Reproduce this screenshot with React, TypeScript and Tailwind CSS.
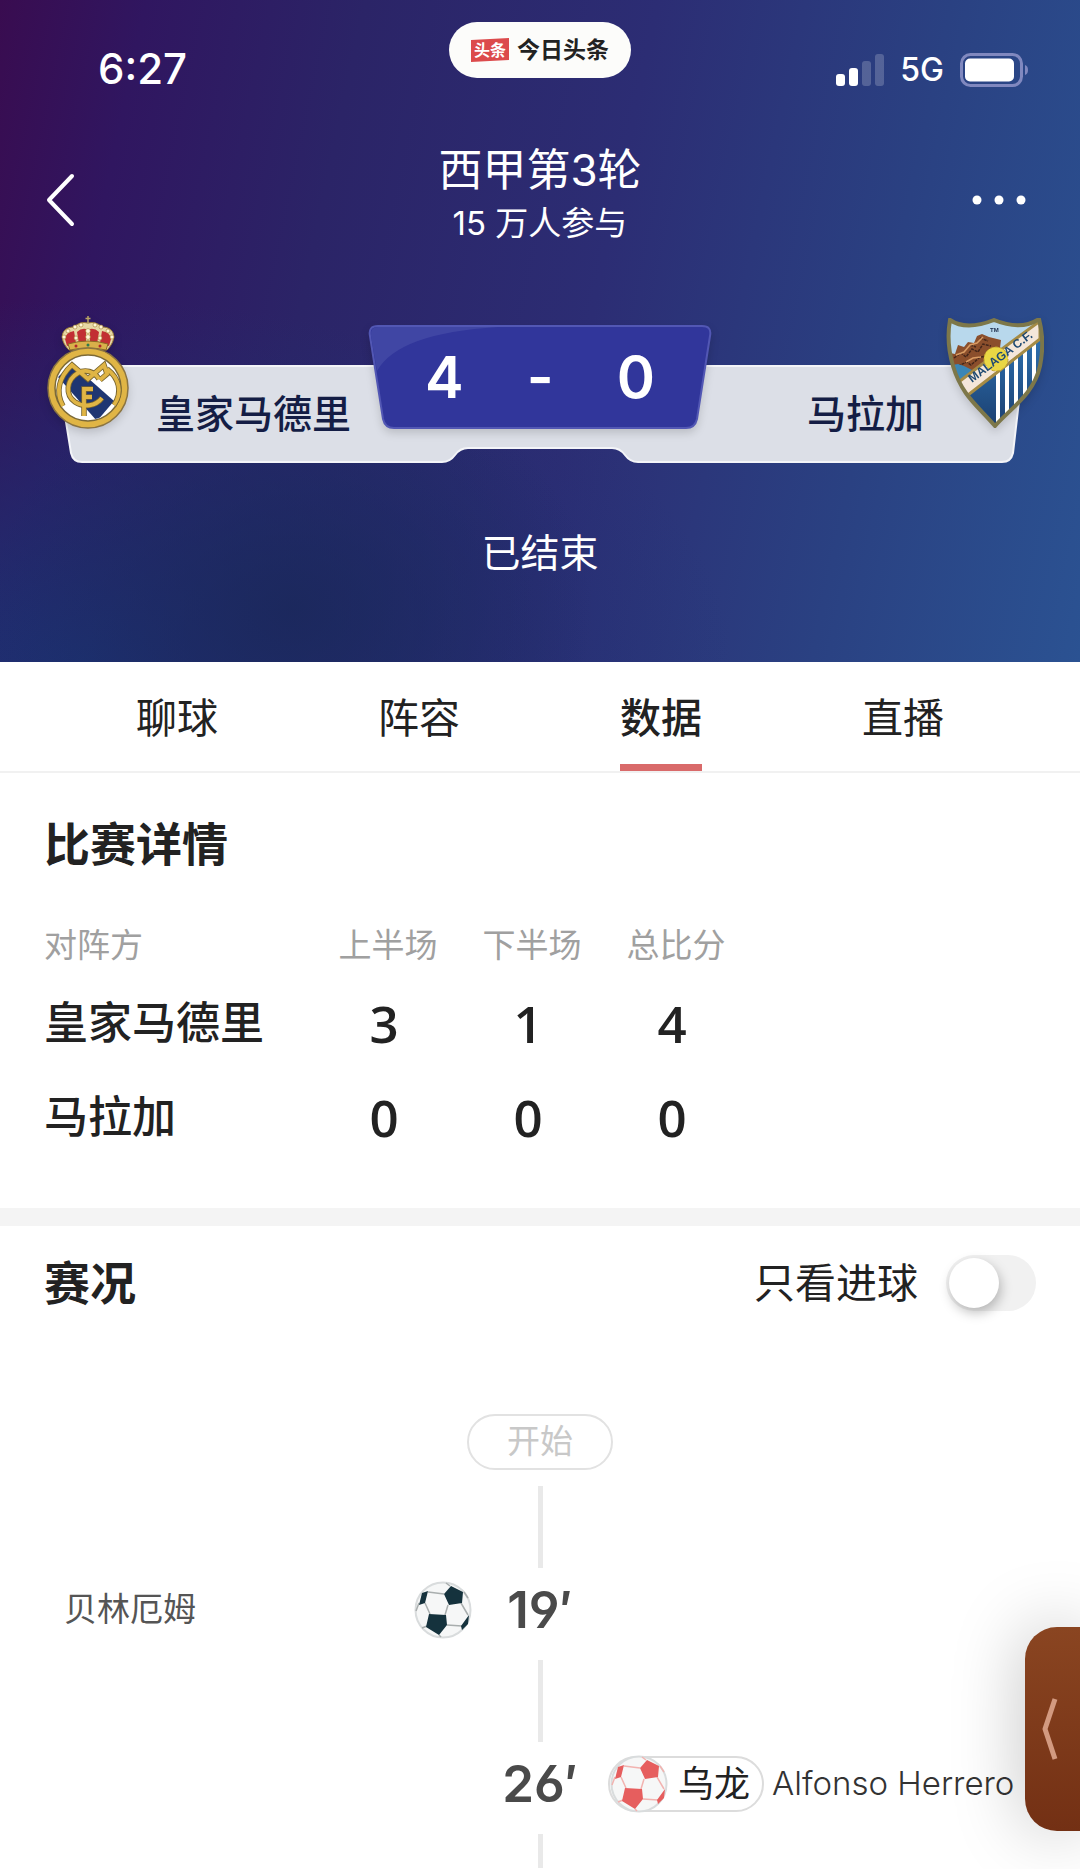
import { useState } from 'react'

const tabs = ['聊球', '阵容', '数据', '直播']

const scores = [
  { team: '皇家马德里', first: 3, second: 1, total: 4 },
  { team: '马拉加', first: 0, second: 0, total: 0 },
]

function SignalIcon() {
  return (
    <svg width="48" height="32" viewBox="0 0 48 32" fill="#fff" aria-hidden="true">
      <rect x="0" y="20" width="9" height="12" rx="3" />
      <rect x="13" y="14" width="9" height="18" rx="3" />
      <rect x="26" y="7" width="9" height="25" rx="3" opacity=".2" />
      <rect x="39" y="0" width="9" height="32" rx="3" opacity=".2" />
    </svg>
  )
}

function BatteryIcon() {
  return (
    <svg width="70" height="34" viewBox="0 0 70 34" aria-hidden="true">
      <rect x="1.5" y="1.5" width="60" height="31" rx="9" fill="none" stroke="#8088bf" strokeWidth="3" />
      <rect x="5" y="5.500" width="49" height="23" rx="5" fill="#fff" />
      <path d="M65 12c4 1 4 9 0 10z" fill="#8088bf" />
    </svg>
  )
}

function MadridCrest() {
  return (
    <svg width="84" height="116" viewBox="0 0 84 116" className="drop-shadow-lg" aria-hidden="true">
      <defs>
        <clipPath id="rm"><circle cx="42" cy="73" r="32" /></clipPath>
      </defs>
      {/* crown */}
      <path d="M23 35C12 24 15 12 28 12Q34 6 42 8q8-2 14 4c13 0 16 12 5 23z" fill="#e6d7a4" stroke="#9a7a34" />
      <path d="M19 24q1-7 9-8l2 12-9 3zM31 17q4-4 9-3v14l-7 1zM44 14q5-1 9 3l-2 12-7-1zM56 16q8 1 9 8l-2 7-9-3z" fill="#c22f33" />
      <g fill="#fff6d8" stroke="#a37d2c" strokeWidth=".6">
        <circle cx="18" cy="22" r="2" /><circle cx="22" cy="16" r="2" /><circle cx="29" cy="12" r="2" />
        <circle cx="35" cy="10" r="2" /><circle cx="49" cy="10" r="2" /><circle cx="55" cy="12" r="2" />
        <circle cx="62" cy="16" r="2" /><circle cx="66" cy="22" r="2" /><circle cx="42" cy="16" r="2.400" />
        <circle cx="42" cy="22" r="2.400" /><circle cx="30" cy="23" r="2" /><circle cx="54" cy="23" r="2" />
      </g>
      <path d="M42 1v8M39.500 3.500h5" stroke="#b9a464" strokeWidth="1.500" />
      <path d="M22 29q20-6 40 0l-2 6q-18-4-36 0z" fill="#d9b04a" stroke="#8a6a25" />
      <circle cx="30" cy="31" r="1.500" fill="#b3262c" /><circle cx="42" cy="30" r="1.500" fill="#2d7a4f" /><circle cx="54" cy="31" r="1.500" fill="#b3262c" />
      {/* roundel */}
      <circle cx="42" cy="73" r="40" fill="#e0b545" stroke="#8b7440" strokeWidth="1.500" />
      <circle cx="42" cy="73" r="33" fill="#fff" stroke="#7c6a38" strokeWidth="1.500" />
      <path d="M12 62l14-13 42 37-17 20z" fill="#1f3672" clipPath="url(#rm)" />
      {[{ c: '#77642f', w: 5.5 }, { c: '#e0b545', w: 3.8 }].map(s => (
        <g key={s.c} fill="none" stroke={s.c} strokeWidth={s.w} strokeLinejoin="miter">
          <path d="M17 91C9 77 13 62 26 50l16 14 16-14 3 9-7 6M61 54c12 9 16 23 7 36" />
          <path d="M53 64c-5-8-14-10-21-6-12 7-13 22-3 29 9 6 21 4 27-4" />
          <path d="M38 101V74h9M38 82h8" />
        </g>
      ))}
    </svg>
  )
}

function MalagaCrest() {
  return (
    <svg width="98" height="110" viewBox="0 0 98 110" className="drop-shadow-lg" aria-hidden="true">
      <defs>
        <clipPath id="mlg"><path d="M4 2Q20 13 48 2q27 11 45-1 6 22 1 47C88 76 65 90 49 108 32 88 16 78 7 48Q0 24 4 2z" /></clipPath>
        <linearGradient id="sea" x1="0" x2="0" y1="0" y2="1">
          <stop offset="0" stopColor="#2f74b4" /><stop offset="1" stopColor="#1b3f70" />
        </linearGradient>
      </defs>
      <g clipPath="url(#mlg)">
        <path d="M0 0h98v110H0z" fill="#b8d8ec" />
        <path d="M0 44l4-9 5 1 3-9 6 2 4-5 6 1 3-7 5-2 7 3 12 3-1 8-8 12-30 20z" fill="#8b4f2c" />
        <path d="M8 40l7-5 5 4 6-8 6 3 5-8 8 2M12 48l9-4 4 3 9-8 10-1M24 27l6 2M34 20l8 3" stroke="#43261a" strokeWidth="1.500" fill="none" strokeDasharray="3 1" />
        <path d="M10 37l8-3 6-7 7-2 6-6M20 44l7-4 8-1" stroke="#d99b62" strokeWidth="1.500" fill="none" />
        <path d="M0 48l12-2 6 2 8 4-20 18z" fill="#3b86b5" />
        <path d="M16 76L98 14v96H16z" fill="url(#sea)" />
        <path d="M50 50h4v60h-4zM59 43h4v60h-4zM68 36h4v60h-4zM77 30h4v56h-4zM86 23h4v50h-4z" fill="#fff" />
        <path d="M10 66L64 25 94 3v18L22 77z" fill="#f4e6da" stroke="#a58b45" strokeWidth="3" />
        <circle cx="50" cy="41" r="12" fill="#ead744" stroke="#c0a22e" strokeDasharray="3 2" />
      </g>
      <path d="M4 2Q20 13 48 2q27 11 45-1 6 22 1 47C88 76 65 90 49 108 32 88 16 78 7 48Q0 24 4 2z" fill="none" stroke="#7d7749" strokeWidth="4" />
      <text transform="translate(26 65) rotate(-37)" fontSize="12" fontWeight="700" fill="#1f4a73" className="font-['Liberation_Sans',sans-serif]">MALAGA C.F.</text>
      <text x="44" y="14" fontSize="6" fontWeight="700" fill="#1a2b4a" className="font-['Liberation_Sans',sans-serif]">TM</text>
    </svg>
  )
}

function Ball({ color, seam }: { color: string; seam: string }) {
  return (
    <svg width="58" height="58" viewBox="0 0 58 58" className="shrink-0" aria-hidden="true">
      <circle cx="29" cy="29" r="27.500" fill="#f6f7f7" stroke="#d9dcdd" strokeWidth="2" />
      <path d="M14 11l16 2M11 22l5 11M34 24l-3 10M47 22l7 12M33 44l15 1M36 5l-4-3M50 11l4 6M5 22l-3 8M13 45l-5 2M25 54l2 2" fill="none" stroke={seam} strokeWidth="1.500" />
      <path d="M37 5l12 6-1 11-13 2-5-11zM15 33l17 1 1 10-8 10-13-8zM8 12l6-2-3 12-6 2zM55 34l-1 9-6 6-1-4z" fill={color} />
    </svg>
  )
}

function Line() {
  return <div className="mx-auto h-[82px] w-[5px] bg-[#e9e9e9]" />
}

export default function App() {
  const [tab, setTab] = useState('数据')
  const [goalsOnly, setGoalsOnly] = useState(false)

  return (
    <div className="relative bg-white font-['Inter','Noto_Sans_CJK_SC',sans-serif] text-[#222]">
      <header className="bg-[radial-gradient(ellipse_28%_38%_at_27%_92%,#1a2759cc_0%,#1a275900_100%),radial-gradient(ellipse_60%_55%_at_8%_100%,#1d3172_0%,#1d317200_100%),linear-gradient(102deg,#390c50_0%,#301660_12%,#2b2467_30%,#2c2d74_54%,#2a4182_78%,#2b5292_100%)] pt-[22px] pb-[85px] text-white">
        {/* Status bar */}
        <div className="grid grid-cols-[1fr_auto_1fr] items-start">
          <div className="flex h-[92px] items-center pl-[98px] text-[42px] font-medium">6:27</div>
          <div className="flex h-14 items-center gap-2 rounded-full bg-[#fcfcfa] px-[22px] text-[#222]">
            <span className="bg-[#dc4b4c] px-[3px] text-[16px] leading-[24px] font-bold text-white [clip-path:polygon(0_8%,100%_0,100%_92%,0_100%)]">头条</span>
            <span className="text-[23px] font-bold">今日头条</span>
          </div>
          <div className="flex h-[92px] items-center justify-end gap-4 pt-1 pr-[50px]">
            <SignalIcon />
            <span className="text-[32px] leading-[40px] font-medium">5G</span>
            <BatteryIcon />
          </div>
        </div>

        <div className="mt-[26px] grid grid-cols-[1fr_auto_1fr] items-center px-11">
          <button aria-label="返回" className="justify-self-start pt-3.5">
            <svg width="32" height="54" viewBox="0 0 32 54" fill="none" stroke="#fff" strokeWidth="4" strokeLinecap="round" strokeLinejoin="round">
              <path d="M28 3L5 27l23 24" />
            </svg>
          </button>
          <div className="text-center">
            <h1 className="text-[44px] leading-[60px]">西甲第3轮</h1>
            <p className="text-[33px] leading-[46px]">15 万人参与</p>
          </div>
          <button aria-label="更多" className="justify-self-end pt-3.5 pr-2.5">
            <svg width="54" height="10" viewBox="0 0 54 10" fill="#fff">
              <circle cx="5" cy="5" r="4.500" />
              <circle cx="27" cy="5" r="4.500" />
              <circle cx="49" cy="5" r="4.500" />
            </svg>
          </button>
        </div>

        {/* Scoreboard */}
        <div className="relative mx-14 mt-[119px] grid h-[98px] grid-cols-[1fr_344px_1fr] items-center text-[39px] font-medium text-[#141d45]">
          <svg viewBox="0 0 968 98" preserveAspectRatio="none" className="absolute inset-0 h-full w-full" aria-hidden="true">
            <path d="M1 1H967L957 88Q955 97 946 97H582Q574 97 569 90Q564 83 556 83H412Q404 83 399 90Q394 97 386 97H26Q17 97 15 88Z" fill="#dcdfe7" stroke="#f3f4f8" strokeWidth="2" />
          </svg>
          <div className="absolute -top-[50px] -left-[10px]"><MadridCrest /></div>
          <div className="relative pl-[100px] whitespace-nowrap">皇家马德里</div>
          <div className="relative -mt-10 flex h-[104px] items-center justify-between self-start px-[57px] text-[58px] leading-[60px] font-semibold text-white">
            <svg viewBox="0 0 344 104" preserveAspectRatio="none" className="absolute inset-0 h-full w-full drop-shadow-lg" aria-hidden="true">
              <path d="M10 1H334Q344 1 342 11L329 94Q327 103 318 103H26Q17 103 15 94L2 11Q0 1 10 1Z" fill="#31369b" stroke="#5257b4" strokeWidth="2" />
              <path d="M10 2H130Q30 8 9 46L3 11Q2 2 10 2Z" fill="#4046a4" />
            </svg>
            <span className="relative">4</span>
            <span className="relative">-</span>
            <span className="relative">0</span>
          </div>
          <div className="relative pr-[100px] text-right whitespace-nowrap">马拉加</div>
          <div className="absolute -top-[47px] -right-[20px]"><MalagaCrest /></div>
        </div>

        <p className="mt-[66px] text-center text-[39px] leading-[48px]">已结束</p>
      </header>

      <nav className="flex border-b-2 border-[#f1f1f1] px-14">
        {tabs.map(t => (
          <button key={t} onClick={() => setTab(t)} className="flex flex-1 justify-center text-[41px]">
            <span className={t === tab ? 'border-b-[7px] border-[#d96a6a] pt-[10px] leading-[92px] font-medium' : 'pt-[10px] leading-[92px]'}>{t}</span>
          </button>
        ))}
      </nav>

      {/* Half-time / full-time scores */}
      <section className="px-11 pt-[41px] pb-11">
        <h2 className="text-[46px] leading-[60px] font-bold">比赛详情</h2>
        <table className="mt-[42px] w-[704px] table-fixed">
          <thead>
            <tr className="h-[60px] text-[33px] text-[#a0a0a0]">
              <th className="w-[272px] p-0 text-left font-normal">对阵方</th>
              <th className="p-0 font-normal">上半场</th>
              <th className="p-0 font-normal">下半场</th>
              <th className="p-0 font-normal">总比分</th>
            </tr>
          </thead>
          <tbody>
            {scores.map(s => (
              <tr key={s.team} className="h-[94px] text-center font-['Open_Sans',sans-serif] text-[51px] leading-[60px] font-semibold">
                <th className="p-0 text-left font-['Inter','Noto_Sans_CJK_SC',sans-serif] text-[44px] font-medium whitespace-nowrap">{s.team}</th>
                <td className="p-0 pr-2">{s.first}</td>
                <td className="p-0 pr-2">{s.second}</td>
                <td className="p-0 pr-2">{s.total}</td>
              </tr>
            ))}
          </tbody>
        </table>
      </section>

      <div className="h-[18px] bg-[#f4f4f4]" />

      {/* Timeline */}
      <section>
        <div className="flex items-center justify-between px-11 pt-[29px]">
          <h2 className="text-[46px] leading-[56px] font-bold">赛况</h2>
          <label className="flex items-center gap-7 text-[41px] leading-[56px]">
            只看进球
            <input
              type="checkbox"
              role="switch"
              checked={goalsOnly}
              onChange={e => setGoalsOnly(e.target.checked)}
              className="h-14 w-[90px] appearance-none rounded-full bg-[#f1f1f1] p-[3px] before:block before:h-[50px] before:w-[50px] before:rounded-full before:bg-white before:shadow-[2px_5px_12px_rgba(0,0,0,0.25)] checked:bg-[#d96a6a] checked:before:ml-[34px]"
            />
          </label>
        </div>

        <div className="mx-auto mt-[103px] mb-4 flex h-14 w-[146px] items-center justify-center rounded-full border-2 border-[#e2e2e2] text-[33px] text-[#c8c8c8]">开始</div>
        <Line />

        <div className="grid h-[92px] grid-cols-[1fr_136px_1fr] items-center px-16 pb-2">
          <div className="flex items-center justify-between text-[33px] text-[#555]">
            贝林厄姆
            <Ball color="#15323d" seam="#a9aeae" />
          </div>
          <time className="text-center text-[51px] leading-[60px] font-semibold text-[#4a4a4a] [font-feature-settings:'ss01']">19′</time>
        </div>
        <Line />

        {!goalsOnly && (
          <>
            <div className="grid h-[92px] grid-cols-[1fr_136px_1fr] items-center px-16 pb-2">
              <time className="col-start-2 text-center text-[51px] leading-[60px] font-semibold text-[#4a4a4a] [font-feature-settings:'ss01']">26′</time>
              <div className="flex items-center gap-2 whitespace-nowrap">
                <div className="flex h-14 items-center gap-2.5 rounded-full border-2 border-[#dcdcdc] pr-3 text-[36px]">
                  <Ball color="#e65e5e" seam="#f2b3b0" />
                  乌龙
                </div>
                <span className="text-[33px] font-light text-[#333]">Alfonso Herrero</span>
              </div>
            </div>
            <div className="mx-auto h-[34px] w-[5px] bg-[#e9e9e9]" />
          </>
        )}
      </section>

      {/* Side drawer handle */}
      <button aria-label="展开" className="fixed right-0 bottom-[38px] flex h-[204px] w-[55px] items-center rounded-l-[32px] bg-linear-to-b from-[#8a4521] to-[#733014] pl-[17px] shadow-[0_0_70px_rgba(0,0,0,0.25)]">
        <svg width="16" height="62" viewBox="0 0 16 62" fill="none" stroke="#d39a80" strokeWidth="5" strokeLinejoin="round">
          <path d="M13 1L3 31l10 30" />
        </svg>
      </button>
    </div>
  )
}
